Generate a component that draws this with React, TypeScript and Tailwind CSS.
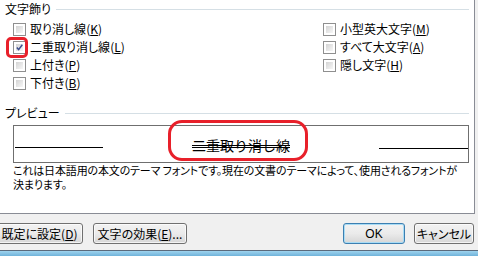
import React from 'react';

const Check = ({ checked = false }: { checked?: boolean }) => (
  <div className="w-[13px] h-[13px] shrink-0 border border-[#8f8f8f] bg-white p-[2px]">
    <div className="w-full h-full bg-gradient-to-br from-[#d4d4d4] to-[#f7f7f7] relative">
      {checked && (
        <svg viewBox="0 0 7 7" className="absolute inset-0 w-full h-full">
          <path d="M0.8 3.6 L2.6 5.6 L6.3 0.8" fill="none" stroke="#3d4f8f" strokeWidth="1.5" />
        </svg>
      )}
    </div>
  </div>
);

const Row = ({ label, acc, checked = false }: { label: string; acc: string; checked?: boolean }) => (
  <div className="h-[18px] flex items-center gap-[4px]">
    <Check checked={checked} />
    <span className="whitespace-nowrap">
      {label}(<span className="underline underline-offset-1">{acc}</span>)
    </span>
  </div>
);

const Heading = ({ text }: { text: string }) => (
  <div className="h-[18px] flex items-center gap-[5px] pl-[5px] pr-[5px]">
    <span className="whitespace-nowrap">{text}</span>
    <div className="flex-1 h-px bg-[#d5dfe5]" />
  </div>
);

const Btn = ({ children, w, primary = false, className = '' }: { children: React.ReactNode; w: string; primary?: boolean; className?: string }) => (
  <div
    className={`${w} h-[21px] rounded-[3px] border flex items-center justify-center ${
      primary ? 'border-[#3c7fb1] ring-1 ring-inset ring-[#a9dcf5]' : 'border-[#707070] ring-1 ring-inset ring-white/70'
    } bg-gradient-to-b from-[#f2f2f2] via-[#ebebeb] to-[#d6d6d6] ${className}`}
  >
    {children}
  </div>
);

export default function App() {
  return (
    <div className="w-[478px] h-[256px] bg-[#f0f0f0] overflow-hidden relative flex flex-col text-[12px] leading-[18px] text-black font-['Noto_Sans_CJK_JP',sans-serif] [font-feature-settings:'palt']">
      {/* tab page */}
      <div className="w-[475px] h-[214px] bg-white border-r border-b border-[#898c95] flex flex-col">
        <Heading text="文字飾り" />
        <div className="flex mt-[2px]">
          <div className="w-[323px] pl-[13px] flex flex-col">
            <Row label="取り消し線" acc="K" />
            <Row label="二重取り消し線" acc="L" checked />
            <Row label="上付き" acc="P" />
            <Row label="下付き" acc="B" />
          </div>
          <div className="flex flex-col">
            <Row label="小型英大文字" acc="M" />
            <Row label="すべて大文字" acc="A" />
            <Row label="隠し文字" acc="H" />
          </div>
        </div>

        <div className="mt-[12px]">
          <Heading text="プレビュー" />
        </div>
        <div className="ml-[13px] mr-[5px] mt-[3px] h-[38px] border border-[#6f6f6f] bg-white flex items-start">
          <div className="ml-[1px] mt-[21px] w-[88px] h-px bg-black" />
          <div className="flex-1 self-center flex justify-center">
            <span className="text-[14px] leading-[16px] mt-[1px] [font-feature-settings:normal] line-through decoration-double decoration-1">
              二重取り消し線
            </span>
          </div>
          <div className="mt-[22px] w-[89px] h-px bg-black" />
        </div>
        <div className="pl-[13px] text-[11px] leading-[14px] tracking-[-0.15px] whitespace-nowrap">
          これは日本語用の本文のテーマ フォントです。現在の文書のテーマによって、使用されるフォントが
          <br />
          決まります。
        </div>
      </div>

      {/* button bar */}
      <div className="h-[36px] flex items-start pt-[9px]">
        <Btn w="w-[87px]" className="ml-[-4px]">
          既定に設定(<span className="underline">D</span>)
        </Btn>
        <Btn w="w-[94px]" className="ml-[10px]">
          文字の効果(<span className="underline">E</span>)...
        </Btn>
        <Btn w="w-[62px]" primary className="ml-[156px] font-['Liberation_Sans',sans-serif]">
          OK
        </Btn>
        <Btn w="w-[60px]" className="ml-[9px]">
          キャンセル
        </Btn>
      </div>

      {/* window frame */}
      <div className="flex-1 border-t border-[#5b6a7c] bg-gradient-to-b from-[#9fd3ee] to-[#6fb3da]" />

      {/* red annotations */}
      <div className="absolute left-[6px] top-[37px] w-[22px] h-[21px] border-[3px] border-[#e8202a] rounded-[5px]" />
      <div className="absolute left-[168px] top-[120px] w-[140px] h-[41px] border-[3px] border-[#e8202a] rounded-[14px]" />
    </div>
  );
}
